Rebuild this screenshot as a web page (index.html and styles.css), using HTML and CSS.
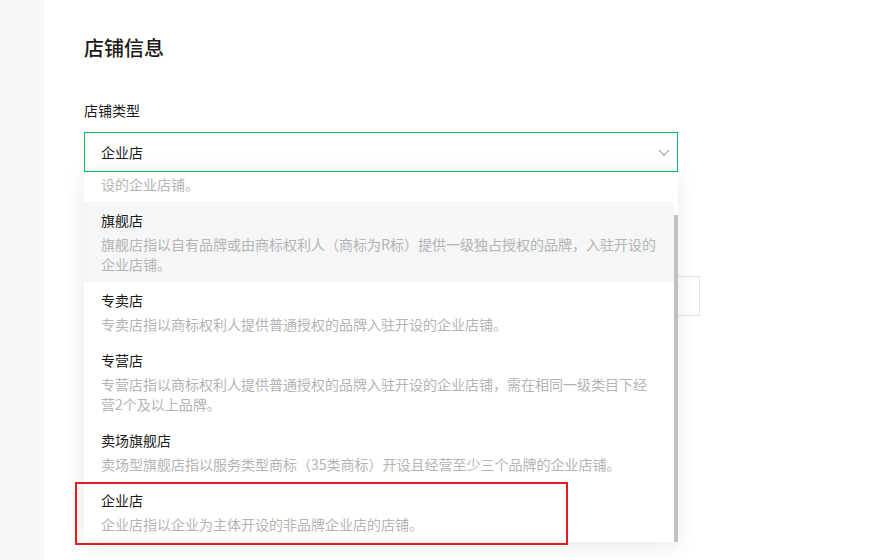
FILE: index.html
```html
<!DOCTYPE html>
<html lang="zh-CN">
<head>
<meta charset="utf-8">
<title>店铺信息</title>
<link rel="stylesheet" href="styles.css">
</head>
<body>
<div class="page">
  <aside class="side"></aside>
  <main class="main">
    <h1 class="title">店铺信息</h1>
    <div class="form-item first">
      <div class="label">店铺类型</div>
      <div class="select-wrap">
        <div class="select">
          <span class="select-value">企业店</span>
          <svg class="chevron" width="12" height="8" viewBox="0 0 12 8"><polyline points="1,1 6,6.2 11,1" fill="none" stroke="#a8a8a8" stroke-width="1.1"/></svg>
        </div>
        <div class="dropdown">
          <div class="viewport">
            <ul class="list">
              <li class="option">
                <div class="opt-title">官方旗舰店</div>
                <div class="opt-desc">官方旗舰店指以自有品牌或由权利人出具独占性授权文件的品牌入驻开<br>设的企业店铺。</div>
              </li>
              <li class="option hover">
                <div class="opt-title">旗舰店</div>
                <div class="opt-desc">旗舰店指以自有品牌或由商标权利人（商标为R标）提供一级独占授权的品牌，入驻开设的企业店铺。</div>
              </li>
              <li class="option">
                <div class="opt-title">专卖店</div>
                <div class="opt-desc">专卖店指以商标权利人提供普通授权的品牌入驻开设的企业店铺。</div>
              </li>
              <li class="option">
                <div class="opt-title">专营店</div>
                <div class="opt-desc">专营店指以商标权利人提供普通授权的品牌入驻开设的企业店铺，需在相同一级类目下经营2个及以上品牌。</div>
              </li>
              <li class="option">
                <div class="opt-title">卖场旗舰店</div>
                <div class="opt-desc">卖场型旗舰店指以服务类型商标（35类商标）开设且经营至少三个品牌的企业店铺。</div>
              </li>
              <li class="option">
                <div class="opt-title">企业店</div>
                <div class="opt-desc">企业店指以企业为主体开设的非品牌企业店的店铺。</div>
              </li>
            </ul>
          </div>
          <div class="scrollbar"><div class="thumb"></div></div>
        </div>
      </div>
    </div>
    <div class="form-item second">
      <div class="label">店铺名称</div>
      <div class="input"></div>
    </div>
  </main>
  <div class="annotation"></div>
</div>
</body>
</html>
```
FILE: styles.css
```css
* { box-sizing: border-box; }
html, body { margin: 0; padding: 0; }
body {
  font-family: "Noto Sans CJK SC", "Noto Sans", sans-serif;
  color: #222;
  background: #fff;
}
.page {
  position: relative;
  display: flex;
  width: 885px;
  height: 560px;
  overflow: hidden;
}
.side {
  width: 44px;
  flex: none;
  background: #f7f8fa;
}
.main {
  flex: 1;
  padding: 34px 0 0 40px;
}
.title {
  margin: 0;
  font-size: 20px;
  line-height: 28px;
  font-weight: 500;
  color: #1a1a1a;
}
.form-item.first { margin-top: 38px; }
.form-item.second { margin-top: 72px; }
.label {
  font-size: 14px;
  line-height: 20px;
  color: #1a1a1a;
  margin-bottom: 12px;
}
.second .label { visibility: hidden; }
.select-wrap {
  position: relative;
  width: 594px;
}
.select {
  height: 40px;
  border: 1px solid #07c160;
  display: flex;
  align-items: center;
  justify-content: space-between;
  padding: 0 7px 0 16px;
  background: #fff;
}
.select-value {
  font-size: 14px;
  line-height: 20px;
  color: #1a1a1a;
}
.chevron { display: block; margin-top: 1px; }
.input {
  width: 616px;
  height: 40px;
  border: 1px solid #e3e3e3;
}
.dropdown {
  position: absolute;
  top: 100%;
  left: 0;
  width: 594px;
  height: 370px;
  background: #fff;
  box-shadow: 0 4px 22px rgba(0, 0, 0, 0.09);
  display: flex;
  z-index: 2;
}
.viewport {
  flex: 1;
  overflow: hidden;
}
.list {
  list-style: none;
  margin: -50px 0 0 0;
  padding: 0;
}
.option {
  padding: 8px 16px 8px 17px;
}
.option.hover { background: #f5f6f7; }
.opt-title {
  font-size: 14px;
  line-height: 20px;
  color: #1a1a1a;
}
.opt-desc {
  margin-top: 4px;
  font-size: 14px;
  line-height: 20px;
  color: #b4b4b4;
}
.scrollbar {
  width: 4px;
  flex: none;
  display: flex;
  flex-direction: column;
}
.thumb {
  margin-top: 43px;
  flex: 1;
  background: #c1c1c1;
}
.annotation {
  position: absolute;
  left: 75px;
  top: 482px;
  width: 493px;
  height: 63px;
  border: 2px solid #e41b23;
  z-index: 3;
}
```
